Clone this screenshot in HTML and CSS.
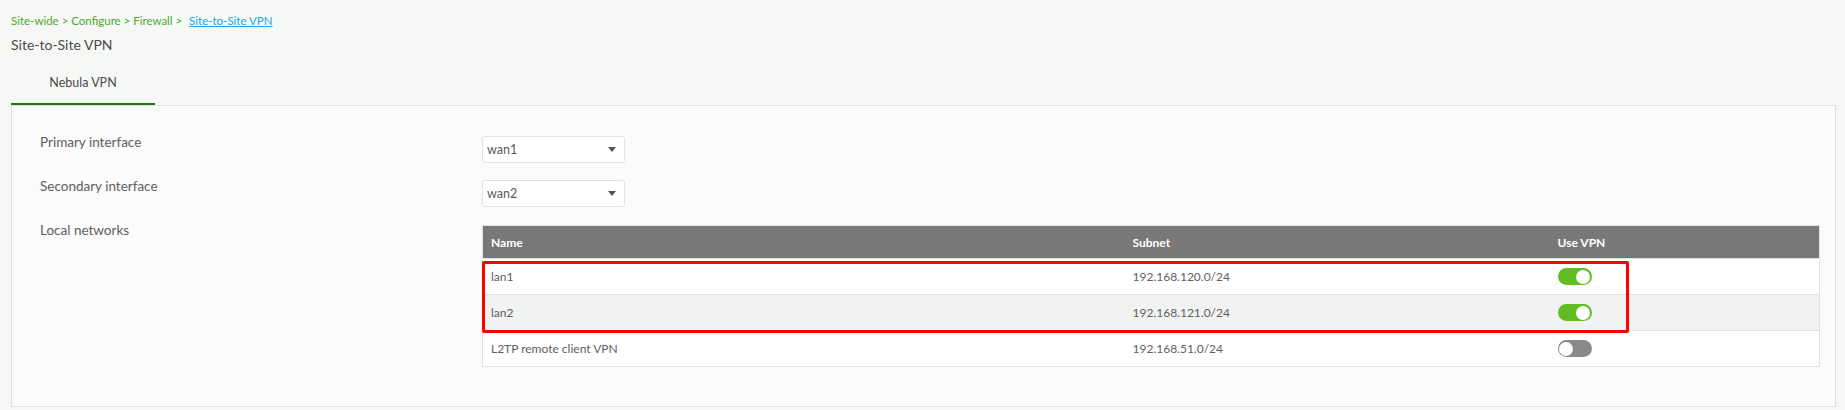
FILE: index.html
```html
<!DOCTYPE html>
<html lang="en">
<head>
  <meta charset="UTF-8">
  <title>Site-to-Site VPN</title>
  <link rel="stylesheet" href="styles.css">
</head>
<body>
  <div class="page">
    <div class="breadcrumb">
      <span>Site-wide &gt; Configure &gt; Firewall &gt;</span>
      <a href="#">Site-to-Site VPN</a>
    </div>
    <h1 class="title">Site-to-Site VPN</h1>

    <div class="tabs">
      <div class="tab active">Nebula VPN</div>
    </div>

    <div class="panel">
      <div class="form-row">
        <div class="label">Primary interface</div>
        <div class="field">
          <div class="select"><span>wan1</span><i class="caret"></i></div>
        </div>
      </div>

      <div class="form-row">
        <div class="label">Secondary interface</div>
        <div class="field">
          <div class="select"><span>wan2</span><i class="caret"></i></div>
        </div>
      </div>

      <div class="form-row">
        <div class="label">Local networks</div>
        <div class="field table-wrap">
          <table class="networks">
            <colgroup>
              <col class="col-name">
              <col class="col-subnet">
              <col class="col-vpn">
            </colgroup>
            <thead>
              <tr>
                <th>Name</th>
                <th>Subnet</th>
                <th>Use VPN</th>
              </tr>
            </thead>
            <tbody>
              <tr>
                <td>lan1</td>
                <td>192.168.120.0/24</td>
                <td><span class="toggle on"></span></td>
              </tr>
              <tr class="alt">
                <td>lan2</td>
                <td>192.168.121.0/24</td>
                <td><span class="toggle on"></span></td>
              </tr>
              <tr>
                <td>L2TP remote client VPN</td>
                <td>192.168.51.0/24</td>
                <td><span class="toggle"></span></td>
              </tr>
            </tbody>
          </table>
          <div class="highlight"></div>
        </div>
      </div>
    </div>
  </div>
</body>
</html>
```

FILE: styles.css
```css
body {
  margin: 0;
  background-color: #f6f8f6;
  font-family: Lato, "Noto Sans", sans-serif;
  color: #5a5a5a;
}

.page {
  padding: 13px 9px 0 11px;
}

.breadcrumb {
  font-size: 11.5px;
  line-height: 16px;
  color: #4ea72e;
}

.breadcrumb a {
  color: #21a6e8;
  margin-left: 4px;
}

.title {
  margin: 7px 0 0;
  font-size: 14px;
  font-weight: normal;
  line-height: 18px;
  color: #4a4a4a;
}

.tabs {
  display: flex;
  margin-top: 17px;
}

.tab {
  width: 144px;
  text-align: center;
  font-size: 12.5px;
  line-height: 16px;
  padding: 4px 0 12px;
  color: #4a4a4a;
}

.tab.active {
  border-bottom: 2px solid #1f7a12;
}

.panel {
  background-color: #fafbfa;
  border: 1px solid #e0e0e0;
  padding: 28px 15px 39px 28px;
}

.form-row {
  display: flex;
  align-items: flex-start;
  margin-bottom: 15px;
}

.form-row:last-child {
  margin-bottom: 0;
}

.label {
  width: 442px;
  flex-shrink: 0;
  font-size: 13.5px;
  line-height: 16px;
  color: #606060;
}

.field {
  flex: 1;
  padding-top: 2px;
}

.select {
  width: 143px;
  height: 27px;
  box-sizing: border-box;
  display: flex;
  align-items: center;
  justify-content: space-between;
  padding: 0 8px 0 4px;
  background-color: #fff;
  border: 1px solid #e2e2e2;
  border-radius: 3px;
  font-size: 12.5px;
  color: #5a5a5a;
}

.caret {
  width: 0;
  height: 0;
  border-left: 4px solid transparent;
  border-right: 4px solid transparent;
  border-top: 5px solid #555;
}

.table-wrap {
  position: relative;
  padding-top: 3px;
}

.networks {
  width: 100%;
  border-collapse: collapse;
  table-layout: fixed;
  font-size: 12px;
  border: 1px solid #e2e2e2;
}

.col-name {
  width: 642px;
}

.col-subnet {
  width: 425px;
}

.networks th {
  background-color: #787878;
  color: #fff;
  font-weight: bold;
  text-align: left;
  height: 33px;
  padding: 0 8px;
  box-sizing: border-box;
}

.networks td {
  height: 36px;
  padding: 0 8px;
  box-sizing: border-box;
  border-top: 1px solid #e3e3e3;
  background-color: #fff;
  color: #606060;
}

.networks tr.alt td {
  background-color: #f1f2f2;
}

.toggle {
  display: block;
  position: relative;
  width: 34px;
  height: 17px;
  border-radius: 9px;
  background-color: #8a8a8a;
}

.toggle::after {
  content: "";
  position: absolute;
  top: 1.5px;
  left: 1px;
  width: 14px;
  height: 14px;
  border-radius: 50%;
  background-color: #fff;
}

.toggle.on {
  background-color: #63bb22;
}

.toggle.on::after {
  left: auto;
  right: 2px;
}

.highlight {
  position: absolute;
  left: 0;
  top: 39px;
  width: 1147px;
  height: 72px;
  box-sizing: border-box;
  border: 3px solid #ff0000;
  border-radius: 2px;
}
```
